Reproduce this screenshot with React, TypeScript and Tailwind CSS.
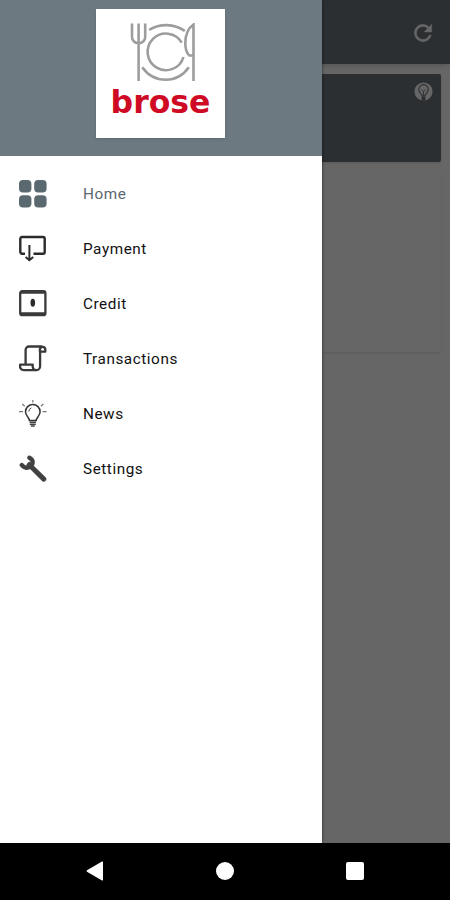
import React from 'react';

interface MenuItem {
  label: string;
  icon: React.ReactNode;
  active?: boolean;
}

const HomeIcon: React.FC = () => (
  <svg className="h-7 w-7" viewBox="0 0 28 28" fill="currentColor">
    <rect x="0" y="0" width="12.4" height="12.4" rx="4" />
    <rect x="15.2" y="0" width="12.4" height="12.4" rx="4" />
    <rect x="0" y="15.2" width="12.4" height="12.4" rx="4" />
    <rect x="15.2" y="15.2" width="12.4" height="12.4" rx="4" />
  </svg>
);

const PaymentIcon: React.FC = () => (
  <svg className="h-7 w-7" viewBox="0 0 28 28" fill="none" stroke="#2b2b2b" strokeWidth="2.4">
    <path d="M6 18.7H3a1.7 1.7 0 0 1-1.7-1.7V3.7A1.7 1.7 0 0 1 3 2h21a1.7 1.7 0 0 1 1.7 1.7V17a1.7 1.7 0 0 1-1.7 1.7h-9.5" />
    <path d="M10.4 10v15M6.6 22l3.8 3.2 3.8-3.2" strokeWidth="2" />
  </svg>
);

const CreditIcon: React.FC = () => (
  <svg className="h-7 w-7" viewBox="0 0 28 28" fill="none" stroke="#3a3a3a">
    <rect x="1.2" y="1.2" width="25.2" height="24" rx="2" strokeWidth="2.3" />
    <path d="M1.5 2.4h24.6M1.5 23.5h24.6" strokeWidth="2.6" />
    <ellipse cx="13.8" cy="12.8" rx="2.3" ry="4" fill="#2b2b2b" stroke="none" />
  </svg>
);

const TransactionsIcon: React.FC = () => (
  <svg className="h-7 w-7" viewBox="0 0 28 28" fill="none" stroke="#3a3a3a" strokeWidth="2.3" strokeLinejoin="round">
    <path d="M23.3 1.5H10a3.4 3.4 0 0 0-3.4 3.4v14.4" />
    <path d="M20.9 7.2V4.5a2.7 2.7 0 0 1 5.4 0v2.2h-5.2v14.5a4 4 0 0 1-4 4H4.6a3.6 3.6 0 0 1-3.5-3.8v-1.8h12.6v2.2a3.5 3.5 0 0 0 3.5 3.4" />
  </svg>
);

const NewsIcon: React.FC = () => (
  <svg className="h-7 w-7" viewBox="0 0 28 28" fill="none" stroke="#333" strokeWidth="1.5">
    <path d="M10.4 20.4c0-3-3.9-4.2-3.9-8.6a7.3 7.3 0 0 1 14.6 0c0 4.4-3.9 5.6-3.9 8.6z" />
    <path d="M9.8 11.5a4 4 0 0 1 2.6-3.6" strokeWidth="0.9" />
    <path d="M10.6 22.3h6.4M10.8 24.2h6M11.8 26h4" stroke="#444" />
    <path d="M13.8 0v2.6M3.2 4l2.5 2.3M24.4 4l-2.5 2.3M0 11.6h4M23.6 11.6h4" stroke="#777" strokeWidth="1.2" />
  </svg>
);

const SettingsIcon: React.FC = () => (
  <svg className="h-7 w-7" viewBox="0 0 28 28" fill="none" stroke="#414141" strokeLinecap="round">
    <path d="M12 11.5l12.8 12.6" strokeWidth="5" />
    <path d="M10.4 2.7c3.7 1.6 4.200 5.700 1.700 8.200s-6.700 2.700-9.300-.900" strokeWidth="4.300" />
    <path d="M10.500 8l-1.800 1.800" strokeWidth="2.500" />
  </svg>
);

const menuItems: MenuItem[] = [
  { label: 'Home', icon: <HomeIcon />, active: true },
  { label: 'Payment', icon: <PaymentIcon /> },
  { label: 'Credit', icon: <CreditIcon /> },
  { label: 'Transactions', icon: <TransactionsIcon /> },
  { label: 'News', icon: <NewsIcon /> },
  { label: 'Settings', icon: <SettingsIcon /> },
];

// Plate, fork and knife above the wordmark
const Logo: React.FC = () => (
  <div className="flex h-[129px] w-[129px] flex-col items-center bg-white shadow-sm">
    <svg className="mt-[14px] ml-[4px] h-[59px] w-[66px]" viewBox="0 0 66 59" fill="none" stroke="#9d9d9d" strokeWidth="2.6">
      <path d="M2 .5v13.500a6.400 6.400 0 0 0 6.600 6.300 6.400 6.400 0 0 0 6.600-6.300V.5M8.600.5v57.500" />
      <path d="M63.500 58V1.500c-5.500 3.800-8.200 10-8.200 18.500 0 6 1.200 10 4 12.500h4.200" />
      <path d="M51.700 19.600A18.300 18.300 0 1 0 53.500 34" />
      <path d="M19.200 6.800C30 .500 44 .300 54.800 8" />
      <path d="M12.300 44.300c5.500 8 14 12.500 23.500 12.500s17.500-4.500 23-12.500" />
    </svg>
    <div className="pt-[2px] font-['DejaVu_Sans',sans-serif] text-[31.5px] leading-[36px] font-bold text-[#cf0a24]">
      brose
    </div>
  </div>
);

const Drawer: React.FC = () => (
  <aside className="absolute inset-y-0 left-0 flex w-[322px] flex-col bg-white shadow-[0_0_3px_rgba(0,0,0,0.6)]">
    <div className="flex h-[156px] justify-center bg-[#6c7980] pt-[9px] pr-px">
      <Logo />
    </div>
    <nav className="pt-[10px]">
      {menuItems.map((item) => (
        <a
          key={item.label}
          href="#"
          className={`flex h-[55px] items-center pl-[19px] text-[15.3px] tracking-[0.55px] ${item.active ? 'text-[#5a686f]' : 'text-[#111]'}`}
        >
          {item.icon}
          <span className="pt-0.5 pl-9">{item.label}</span>
        </a>
      ))}
    </nav>
  </aside>
);

const HomeScreen: React.FC = () => (
  <div className="flex h-full flex-col bg-white">
    <header className="flex h-16 shrink-0 items-center justify-end bg-[#6e777e] pt-px pr-[14px] shadow-md">
      <svg className="h-[26px] w-[26px]" viewBox="0 0 24 24" fill="#fff" stroke="#fff" strokeWidth="0.4">
        <path d="M17.65 6.35A7.96 7.96 0 0 0 12 4a8 8 0 1 0 7.73 10h-2.08A6 6 0 1 1 12 6c1.66 0 3.14.69 4.22 1.78L13 11h7V4z" />
      </svg>
    </header>
    <div className="flex flex-col gap-[9px] py-[10px] pr-[9px] pl-[9px]">
      <section className="flex h-[88px] justify-end rounded-xs bg-[#6e777e] pt-2 pr-2 shadow">
        <svg className="h-[19px] w-[19px]" viewBox="0 0 20 20">
          <circle cx="10" cy="10" r="9.5" fill="#fff" />
          <path d="M8 14c0-2-3-3-3-6.200a5 5 0 0 1 10 0C15 11 12 12 12 14z" fill="none" stroke="#6e777e" strokeWidth="1.2" />
          <path d="M8 15h4v4.500H8z" fill="#6e777e" />
          <path d="M8 8l2 2 2-2M10 10v4" fill="none" stroke="#6e777e" />
        </svg>
      </section>
      <section className="h-[181px] rounded-xs bg-white shadow" />
    </div>
  </div>
);

const App: React.FC = () => {
  return (
    <div className="flex h-[900px] w-[450px] flex-col overflow-hidden font-[Roboto,sans-serif]">
      <main className="relative h-[843px] overflow-hidden">
        <HomeScreen />
        <div className="absolute inset-0 bg-black/60" />
        <Drawer />
      </main>
      <footer className="flex flex-1 items-center justify-between bg-black pr-[86px] pb-[2px] pl-[86px]">
        <svg className="h-5 w-[18px]" viewBox="0 0 18 20" fill="#fff">
          <path d="M1 9.3L16 .6q1-.4 1 .6v17.600q0 1-1 .600L1 10.700q-1-.700 0-1.400z" />
        </svg>
        <span className="h-[18px] w-[18px] rounded-full bg-white" />
        <span className="h-[18px] w-[18px] rounded-xs bg-white" />
      </footer>
    </div>
  );
};

export default App;
